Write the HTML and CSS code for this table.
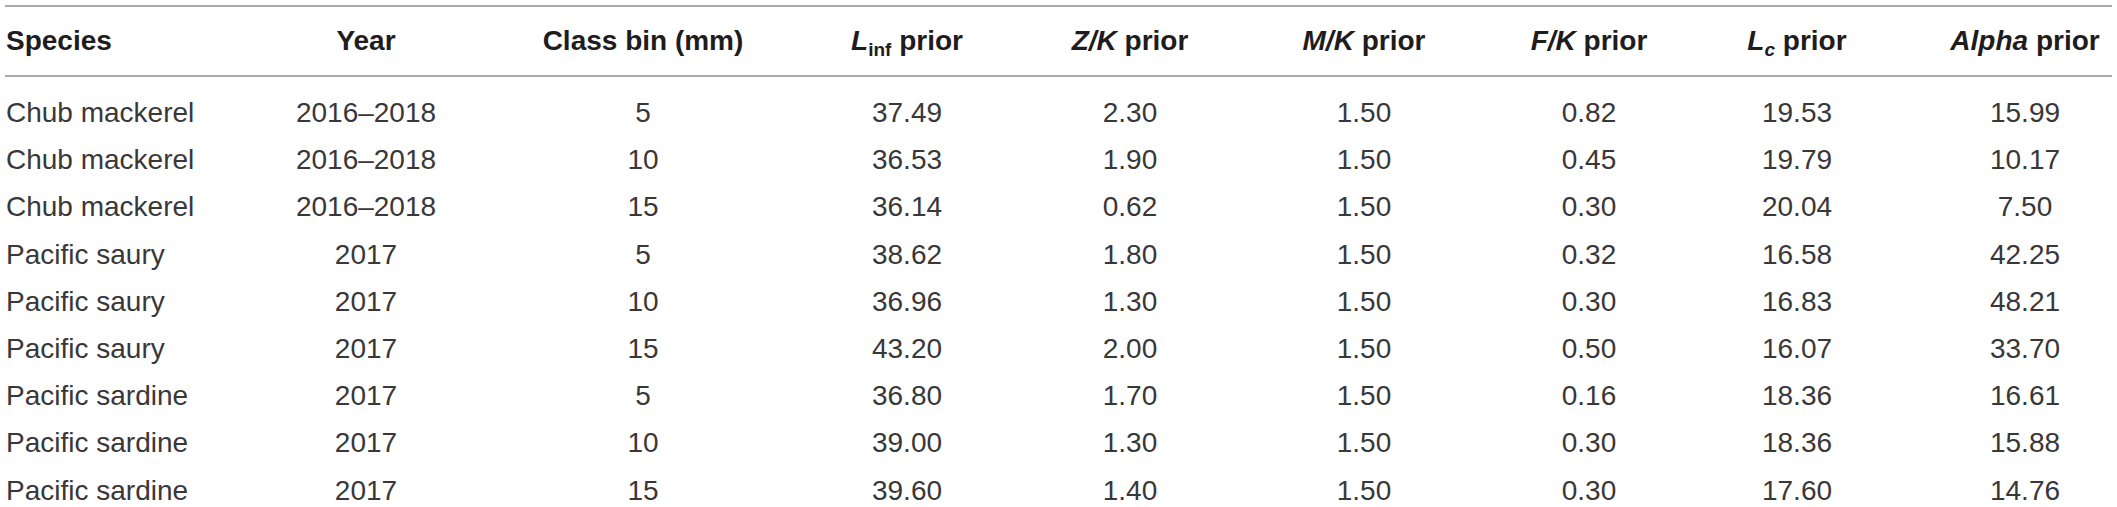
FILE: index.html
```html
<!DOCTYPE html>
<html lang="en">
<head>
<meta charset="utf-8">
<title>Priors table</title>
<link rel="stylesheet" href="styles.css">
</head>
<body>
<table class="priors">
  <colgroup>
    <col class="c-species">
    <col class="c-year">
    <col class="c-bin">
    <col class="c-linf">
    <col class="c-zk">
    <col class="c-mk">
    <col class="c-fk">
    <col class="c-lc">
    <col class="c-alpha">
  </colgroup>
  <thead>
    <tr>
      <th class="left">Species</th>
      <th>Year</th>
      <th>Class bin (mm)</th>
      <th><i>L</i><sub>inf</sub> prior</th>
      <th><i>Z/K</i> prior</th>
      <th><i>M/K</i> prior</th>
      <th><i>F/K</i> prior</th>
      <th><i>L<sub>c</sub></i> prior</th>
      <th><i>Alpha</i> prior</th>
    </tr>
  </thead>
  <tbody>
    <tr><td class="left">Chub mackerel</td><td>2016–2018</td><td>5</td><td>37.49</td><td>2.30</td><td>1.50</td><td>0.82</td><td>19.53</td><td>15.99</td></tr>
    <tr><td class="left">Chub mackerel</td><td>2016–2018</td><td>10</td><td>36.53</td><td>1.90</td><td>1.50</td><td>0.45</td><td>19.79</td><td>10.17</td></tr>
    <tr><td class="left">Chub mackerel</td><td>2016–2018</td><td>15</td><td>36.14</td><td>0.62</td><td>1.50</td><td>0.30</td><td>20.04</td><td>7.50</td></tr>
    <tr><td class="left">Pacific saury</td><td>2017</td><td>5</td><td>38.62</td><td>1.80</td><td>1.50</td><td>0.32</td><td>16.58</td><td>42.25</td></tr>
    <tr><td class="left">Pacific saury</td><td>2017</td><td>10</td><td>36.96</td><td>1.30</td><td>1.50</td><td>0.30</td><td>16.83</td><td>48.21</td></tr>
    <tr><td class="left">Pacific saury</td><td>2017</td><td>15</td><td>43.20</td><td>2.00</td><td>1.50</td><td>0.50</td><td>16.07</td><td>33.70</td></tr>
    <tr><td class="left">Pacific sardine</td><td>2017</td><td>5</td><td>36.80</td><td>1.70</td><td>1.50</td><td>0.16</td><td>18.36</td><td>16.61</td></tr>
    <tr><td class="left">Pacific sardine</td><td>2017</td><td>10</td><td>39.00</td><td>1.30</td><td>1.50</td><td>0.30</td><td>18.36</td><td>15.88</td></tr>
    <tr><td class="left">Pacific sardine</td><td>2017</td><td>15</td><td>39.60</td><td>1.40</td><td>1.50</td><td>0.30</td><td>17.60</td><td>14.76</td></tr>
  </tbody>
</table>
</body>
</html>
```

FILE: styles.css
```css
html, body {
  margin: 0;
  padding: 0;
  background: #ffffff;
}

body {
  font-family: "Liberation Sans", Arial, Helvetica, sans-serif;
  color: #231f20;
}

.priors {
  margin: 5px 0 0 5px;
  width: 2107px;
  table-layout: fixed;
  border-collapse: separate;
  border-spacing: 0;
  font-size: 28px;
}

.c-species { width: 201px; }
.c-year { width: 320px; }
.c-bin { width: 234px; }
.c-linf { width: 294px; }
.c-zk { width: 152px; }
.c-mk { width: 316px; }
.c-fk { width: 134px; }
.c-lc { width: 282px; }
.c-alpha { width: 174px; }

.priors th,
.priors td {
  padding: 0;
  text-align: center;
  white-space: nowrap;
  vertical-align: top;
}

.priors th {
  font-weight: bold;
  line-height: 68px;
  border-top: 2px solid #a9a9a9;
  border-bottom: 2px solid #a9a9a9;
  color: #1f1c1d;
}

.priors td {
  line-height: 47.2px;
  font-weight: normal;
  color: #3a3738;
}

.priors tbody tr:first-child td {
  padding-top: 12px;
}

.priors .left {
  text-align: left;
  padding-left: 1px;
}

.priors sub {
  font-size: 0.68em;
  line-height: 0;
  vertical-align: -0.3em;
}

.priors i {
  font-style: italic;
}
```
